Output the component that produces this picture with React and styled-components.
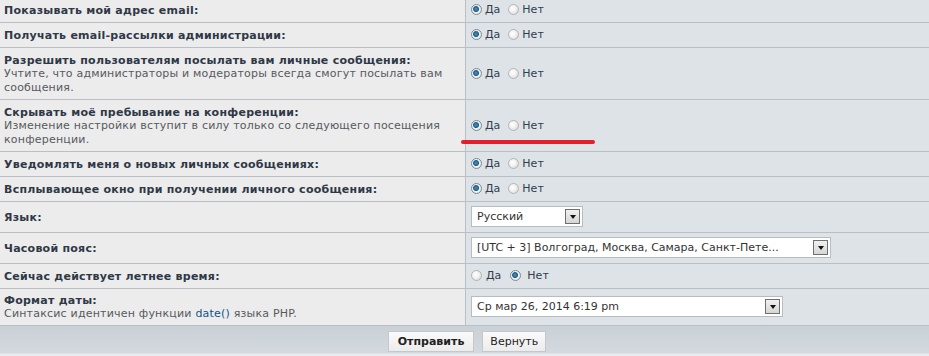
import React from 'react'
import styled, { createGlobalStyle } from 'styled-components'

const Global = createGlobalStyle`
  body {
    margin: 0;
    background: #dee3e7;
    font-family: "DejaVu Sans", Verdana, sans-serif;
  }
`

const Page = styled.div`
  position: relative;
  width: 929px;
  height: 358px;
  margin-top: -2px;
  overflow: hidden;
  background: #dee3e7;
`

const Row = styled.div`
  display: grid;
  grid-template-columns: 466px 1fr;
  border-bottom: 1px solid #b9bfc4;
`

const Label = styled.div`
  display: flex;
  flex-direction: column;
  justify-content: center;
  background: #ececec;
  border-right: 1px solid #b9bfc4;
  padding: ${p => (p.$tight ? '5px 4px 4px' : '6px 4px 5px')};
  color: #2f3846;
  line-height: 13px;
`

const Title = styled.div`
  font-size: 11px;
  font-weight: bold;
  letter-spacing: 0.25px;
`

const Hint = styled.div`
  max-width: 450px;
  font-size: 11px;
  letter-spacing: 0.2px;
  line-height: 13.5px;
  color: #565a60;
`

const Link = styled.span`
  color: #105289;
`

const Field = styled.div`
  display: flex;
  align-items: center;
  padding: 4px 5px 5px;
  background: #dee3e7;
  font-size: 11px;
  color: #323d4f;
`

const Choice = styled.label`
  display: inline-flex;
  align-items: center;
  margin-right: ${p => p.$gap || 8}px;
`

const Dot = styled.span`
  width: 11px;
  height: 11px;
  border-radius: 50%;
  box-sizing: border-box;
  border: 1px solid ${p => (p.$on ? '#7c8b97' : '#b4b4b4')};
  background: ${p =>
    p.$on
      ? 'radial-gradient(circle at 45% 45%, #4f93c2 0, #1f5f8c 2.5px, #f2f2f2 3.5px, #d8d8d8 100%)'
      : 'radial-gradient(circle at 40% 40%, #ffffff 0, #f3f3f3 40%, #d0d0d0 100%)'};
  margin-right: ${p => p.$space || 3}px;
`

const Select = styled.div`
  display: flex;
  align-items: center;
  justify-content: space-between;
  box-sizing: border-box;
  width: ${p => p.$width}px;
  height: 21px;
  background: #fff;
  border: 1px solid #b7bcc1;
  padding: 0 2px 0 5px;
  font-size: 11px;
  color: #333;
`

const Arrow = styled.span`
  width: 15px;
  height: 15px;
  box-sizing: border-box;
  border: 1px solid #6f6f6f;
  background: linear-gradient(#f0f0f0, #d6d6d6);
  display: flex;
  align-items: center;
  justify-content: center;

  &::after {
    content: '';
    border-left: 3.5px solid transparent;
    border-right: 3.5px solid transparent;
    border-top: 4px solid #111;
    margin-top: 1px;
  }
`

const Footer = styled.div`
  display: flex;
  justify-content: center;
  gap: 8px;
  padding: 5px 0 0 5px;
  height: 34px;
  box-sizing: border-box;
  background: linear-gradient(#c9d0d6, #d3d9de 78%, #e9ecef 83%, #e9ecef);
`

const Button = styled.button`
  height: 21px;
  padding: 0 ${p => (p.$primary ? 9 : 7)}px;
  border: 1px solid #c4c8cc;
  background: linear-gradient(#fafafa, #ececec);
  font-family: "DejaVu Sans", Verdana, sans-serif;
  font-size: 11px;
  font-weight: ${p => (p.$primary ? 'bold' : 'normal')};
  color: #222;
`

const Mark = styled.div`
  position: absolute;
  left: 461px;
  top: 142px;
  width: 134px;
  height: 4px;
  border-radius: 2px;
  background: #e2202d;
`

function YesNo({ yes = true, gap }) {
  return (
    <>
      <Choice $gap={gap}>
        <Dot $on={yes} $space={yes ? 3 : 4} />
        Да
      </Choice>
      <Choice>
        <Dot $on={!yes} $space={yes ? 3 : 6} />
        Нет
      </Choice>
    </>
  )
}

const rows = [
  { title: 'Показывать мой адрес email:' },
  { title: 'Получать email-рассылки администрации:' },
  {
    title: 'Разрешить пользователям посылать вам личные сообщения:',
    hint: 'Учтите, что администраторы и модераторы всегда смогут посылать вам сообщения.',
  },
  {
    title: 'Скрывать моё пребывание на конференции:',
    hint: 'Изменение настройки вступит в силу только со следующего посещения конференции.',
  },
  { title: 'Уведомлять меня о новых личных сообщениях:' },
  { title: 'Всплывающее окно при получении личного сообщения:' },
]

export default function App() {
  return (
    <Page>
      <Global />
      {rows.map(r => (
        <Row key={r.title}>
          <Label>
            <Title>{r.title}</Title>
            {r.hint && <Hint>{r.hint}</Hint>}
          </Label>
          <Field>
            <YesNo />
          </Field>
        </Row>
      ))}
      <Row>
        <Label>
          <Title>Язык:</Title>
        </Label>
        <Field>
          <Select $width={112}>
            Русский
            <Arrow />
          </Select>
        </Field>
      </Row>
      <Row>
        <Label>
          <Title>Часовой пояс:</Title>
        </Label>
        <Field>
          <Select $width={360}>
            [UTC + 3] Волгоград, Москва, Самара, Санкт-Пете...
            <Arrow />
          </Select>
        </Field>
      </Row>
      <Row>
        <Label>
          <Title>Сейчас действует летнее время:</Title>
        </Label>
        <Field>
          <YesNo yes={false} gap={9} />
        </Field>
      </Row>
      <Row>
        <Label $tight>
          <Title>Формат даты:</Title>
          <Hint>
            Синтаксис идентичен функции <Link>date()</Link> языка PHP.
          </Hint>
        </Label>
        <Field>
          <Select $width={312}>
            Ср мар 26, 2014 6:19 pm
            <Arrow />
          </Select>
        </Field>
      </Row>
      <Footer>
        <Button $primary>Отправить</Button>
        <Button>Вернуть</Button>
      </Footer>
      <Mark />
    </Page>
  )
}
